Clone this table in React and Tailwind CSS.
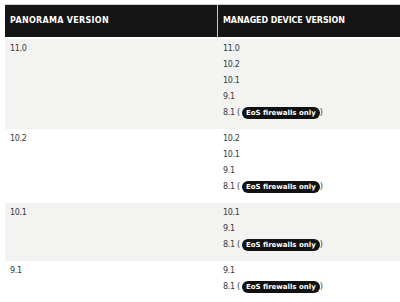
import React from "react";

const rows = [
  { p: "11.0", m: ["11.0", "10.2", "10.1", "9.1", "8.1"], bg: "bg-[#f3f3f2]" },
  { p: "10.2", m: ["10.2", "10.1", "9.1", "8.1"], bg: "bg-white" },
  { p: "10.1", m: ["10.1", "9.1", "8.1"], bg: "bg-[#f3f3f2]" },
  { p: "9.1", m: ["9.1", "8.1"], bg: "bg-white" },
];

function Line({ v }) {
  if (v === "8.1") {
    return (
      <div className="h-[16px] leading-[16px] flex items-center whitespace-nowrap">
        <span className="tracking-[-0.3px]">8.1 (</span>
        <span className="ml-[2px] bg-[#111] text-white font-bold rounded-full h-[12px] leading-[12px] px-[4px] text-[7px]">
          EoS firewalls only
        </span>
        <span>)</span>
      </div>
    );
  }
  return <div className="h-[16px] leading-[16px] tracking-[-0.3px]">{v}</div>;
}

export default function App() {
  return (
    <div
      className="w-[400px] h-[302px] overflow-hidden bg-white pt-[4px] pl-[5px] text-[#343a44] text-[8px]"
      style={{ fontFamily: '"DejaVu Sans", sans-serif' }}
    >
      <div className="grid grid-cols-[212px_1fr] border-t border-[#cfcfcf]">
        <div className="bg-[#151515] h-[32px] flex items-center pl-[5px] text-white font-bold text-[8px] tracking-[0.3px]">
          PANORAMA VERSION
        </div>
        <div className="bg-[#151515] h-[32px] flex items-center pl-[5px] text-white font-bold text-[8px] tracking-[-0.1px] border-l border-[#c8c8c8]">
          MANAGED DEVICE VERSION
        </div>
        <div className="col-span-2 h-[2px] bg-white"></div>
        {rows.map((r, i) => (
          <React.Fragment key={i}>
            <div className={`${r.bg} pt-[2px] pb-[8px] pl-[5px]`}>
              <div className="h-[16px] leading-[16px] tracking-[-0.3px]">{r.p}</div>
            </div>
            <div className={`${r.bg} pt-[2px] pb-[8px] pl-[6px]`}>
              {r.m.map((v, j) => (
                <Line key={j} v={v} />
              ))}
            </div>
          </React.Fragment>
        ))}
      </div>
    </div>
  );
}
